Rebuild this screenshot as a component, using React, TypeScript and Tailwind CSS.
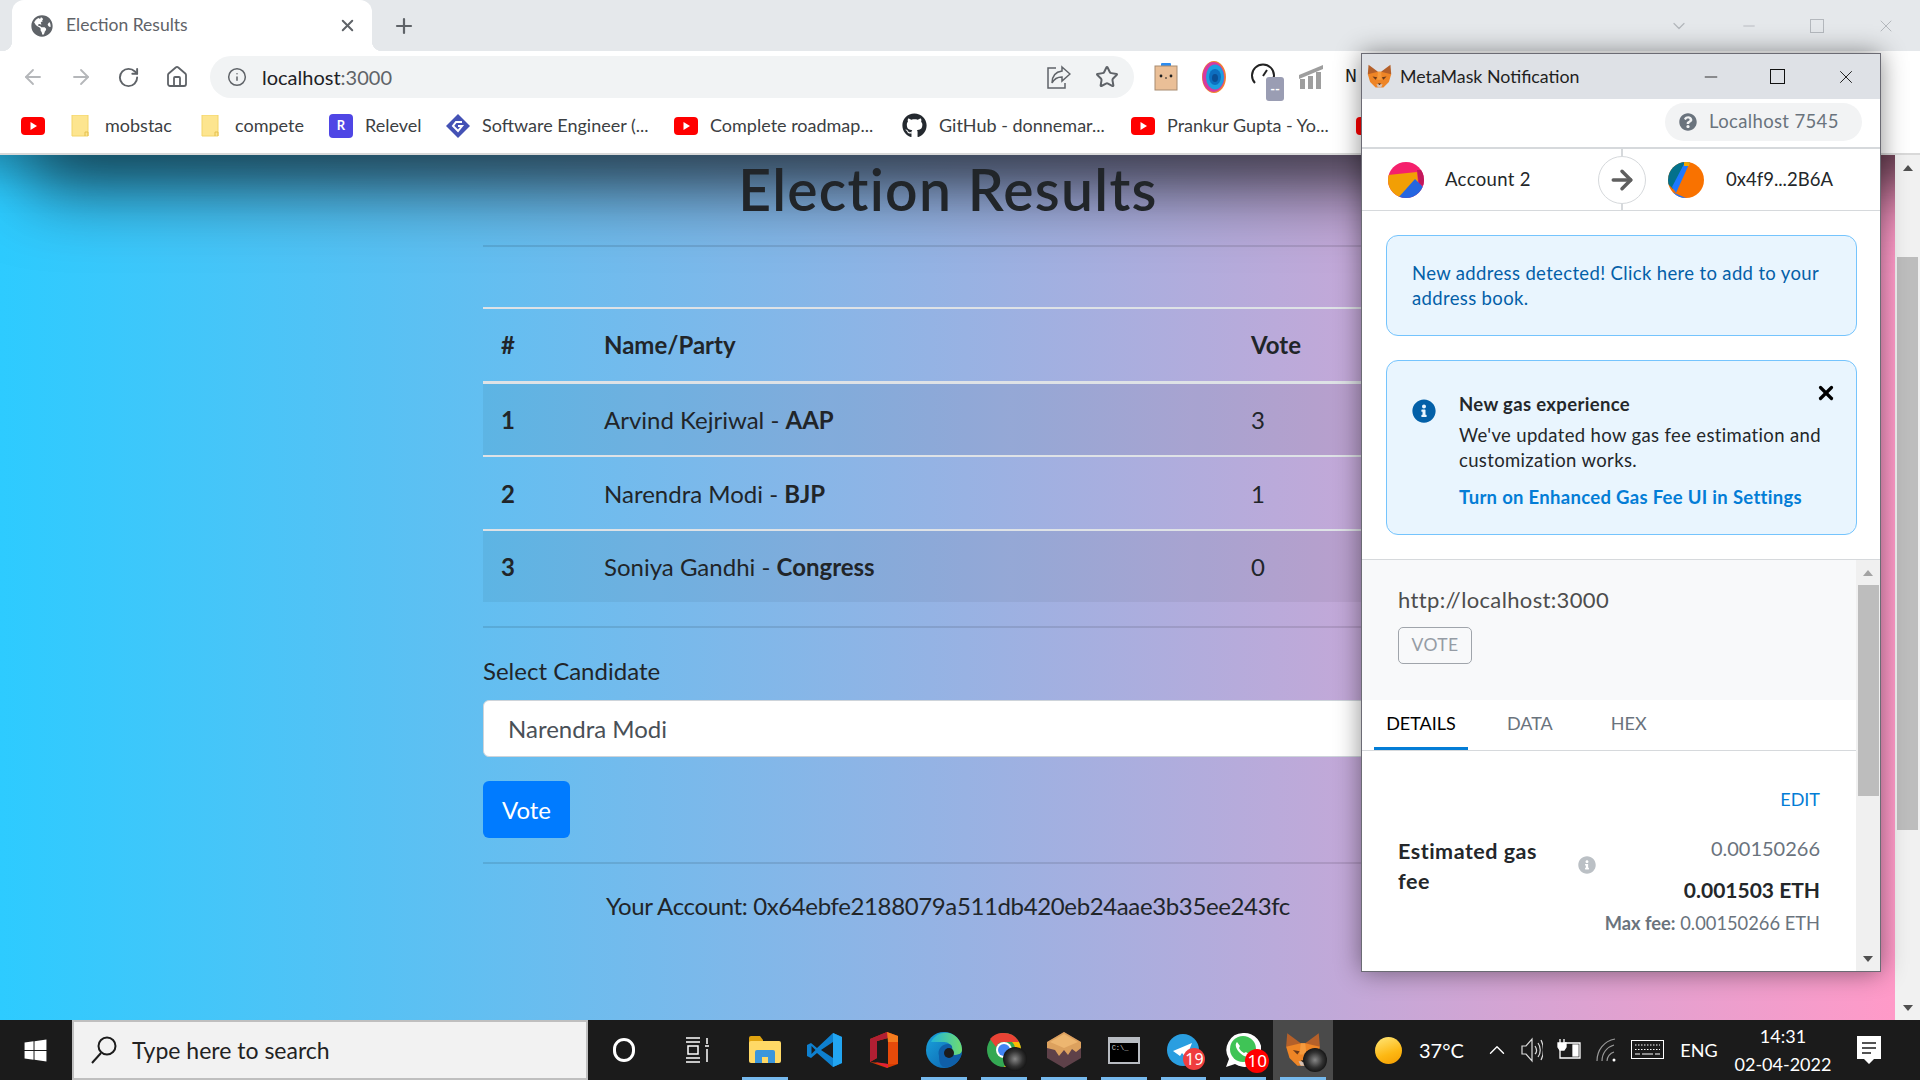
import React from "react";
import { ArrowLeft, ArrowRight, RotateCw, Home, Info, Star, X, Plus, Minus, ChevronUp, ArrowRight as Arr } from "lucide-react";
import { FaGithub, FaGlobeAmericas, FaInfoCircle, FaQuestionCircle, FaWindows } from "react-icons/fa";

const Yt = () => (
  <svg width="24" height="18" viewBox="0 0 24 18" className="shrink-0">
    <rect width="24" height="18" rx="4" fill="#f00" />
    <polygon points="9.5,5 9.5,13 16,9" fill="#fff" />
  </svg>
);
const Folder = () => (
  <svg width="18" height="22" viewBox="0 0 18 22" className="shrink-0">
    <path d="M1 0h16v21H1z" fill="#fde58f" stroke="#f3d56b" />
    <path d="M14 21v-4h3v4" fill="none" stroke="#e5c04f" />
  </svg>
);
const Relevel = () => (
  <div className="w-6 h-6 shrink-0 rounded-[4px] bg-[#4f46e5] text-white text-[13px] font-bold flex items-center justify-center">R</div>
);
const Diamond = () => (
  <svg width="24" height="24" viewBox="0 0 24 24" className="shrink-0">
    <polygon points="12,0 24,12 12,24 0,12" fill="#4452b5" />
    <path d="M16 8h-6l-3 4 5 5 4-5h-4" fill="none" stroke="#fff" strokeWidth="2" />
  </svg>
);
const Fox = ({ size = 24 }: { size?: number }) => (
  <svg width={size} height={size} viewBox="0 0 32 32" className="shrink-0">
    <polygon points="2,1 14,10 9,17 1,13" fill="#b4602a" />
    <polygon points="30,1 18,10 23,17 31,13" fill="#b4602a" />
    <polygon points="1,13 14,10 18,10 31,13 28,23 21,30 11,30 4,23" fill="#ee8526" />
    <polygon points="14,10 18,10 19,20 13,20" fill="#f69b3e" />
    <polygon points="7,16 13,17 11,20" fill="#6b3a1a" />
    <polygon points="25,16 19,17 21,20" fill="#6b3a1a" />
    <polygon points="12,26 20,26 18,30 14,30" fill="#d7c1b3" />
    <polygon points="14,25 18,25 16,27" fill="#222" />
  </svg>
);
const Tile = () => (
  <svg width="24" height="28" viewBox="0 0 24 28">
    <rect x="7" y="0" width="10" height="5" rx="1" fill="#2c8cf0" />
    <rect x="1" y="3" width="22" height="24" fill="#eabf97" stroke="#a88b70" />
    <circle cx="7" cy="13" r="1.4" fill="#222" />
    <circle cx="17" cy="13" r="1.4" fill="#222" />
    <path d="M11 15h2" stroke="#222" />
  </svg>
);
const Orb = () => (
  <svg width="24" height="32" viewBox="0 0 24 32">
    <ellipse cx="12" cy="16" rx="12" ry="16" fill="#f2852e" />
    <ellipse cx="11.5" cy="16" rx="11" ry="15" fill="#d63aa0" />
    <ellipse cx="13" cy="16" rx="9" ry="12.5" fill="#1c9ee0" />
    <ellipse cx="13" cy="16" rx="6" ry="8" fill="#0d6fc0" />
    <ellipse cx="13" cy="17" rx="3" ry="4" fill="#0a4f95" />
  </svg>
);
const Gauge = () => (
  <div className="relative w-[30px] h-[30px]">
    <svg width="26" height="26" viewBox="0 0 26 26">
      <path d="M5 21a11 11 0 1 1 16 0" fill="none" stroke="#222" strokeWidth="2" />
      <path d="M13 14l4-6" stroke="#222" strokeWidth="2" />
    </svg>
    <div className="absolute left-[16px] top-[15px] w-[18px] h-[24px] rounded-[3px] bg-[#9a9db3] text-white text-[13px] font-bold leading-[24px] text-center">--</div>
  </div>
);
const Bars = () => (
  <svg width="24" height="24" viewBox="0 0 24 24" fill="#9e9e9e">
    <polygon points="0,10 24,0 24,4 0,14" />
    <rect x="1" y="14" width="5" height="10" />
    <rect x="9" y="11" width="5" height="13" />
    <rect x="17" y="7" width="5" height="17" />
  </svg>
);
const Share = () => (
  <svg width="24" height="24" viewBox="0 0 24 24" fill="none" stroke="#5f6368" strokeWidth="1.5">
    <path d="M9 3H1v20h17v-5" />
    <path d="M15 2l8 7-8 7v-4c-5 0-8 2-10 6 0-6 3-11 10-12z" />
  </svg>
);

const Sun = () => <div className="w-[27px] h-[27px] rounded-full bg-[linear-gradient(160deg,#ffe77a,#fdb813_60%,#f59c00)]" />;
const VSCode = () => (
  <svg width="36" height="36" viewBox="0 0 36 36">
    <path d="M26 1l9 4v26l-9 4-16-14-6 5-4-2V13l4-2 6 5z" fill="#0e80cf" />
    <path d="M26 1l9 4v26l-9 4z" fill="#22a5f1" />
    <path d="M26 10L14 18l12 8z" fill="#1c1c1c" />
    <path d="M4.500 14v8l4-4z" fill="#1c1c1c" />
  </svg>
);
const Office = () => (
  <svg width="28" height="36" viewBox="0 0 28 36">
    <path d="M17 0l11 4v28l-11 4-17-6 18 2V6L7 9v17l-7 4V7z" fill="#d83b01" />
    <path d="M17 0L0 7v23l7-4V9l11-3V0z" fill="#b11f33" />
    <path d="M18 6l10-2v28l-10 0z" fill="#e64a0a" />
    <path d="M17 0l11 4v6h-10z" fill="#f57c1e" />
    <path d="M5 30l13 2v4z" fill="#e0203a" />
  </svg>
);
const Edge = () => (
  <svg width="36" height="36" viewBox="0 0 36 36">
    <defs>
      <linearGradient id="eg" x1="0" y1="0" x2="1" y2="1">
        <stop offset="0" stopColor="#1aa5dd" />
        <stop offset="1" stopColor="#0b5cab" />
      </linearGradient>
      <linearGradient id="eg2" x1="0" y1="0" x2="1" y2="0">
        <stop offset="0" stopColor="#23b5d8" />
        <stop offset="1" stopColor="#6fdc70" />
      </linearGradient>
    </defs>
    <circle cx="18" cy="18" r="18" fill="url(#eg)" />
    <path d="M5 10C9 2 18-1 26 2c6 3 10 9 10 16 0 3-3 5-7 5-3 0-4-2-3-4 1-5-3-9-8-9-6 0-10 0-13 0z" fill="url(#eg2)" />
    <path d="M13 24c-2-7 3-12 9-12 3 0 5 2 4 6-2 6 4 6 10 3-2 9-10 15-18 14-4-1-5-6-5-11z" fill="#0f5fa8" />
    <circle cx="23" cy="21" r="5" fill="#1c1c1c" />
  </svg>
);
const Thumb = () => (
  <div className="absolute right-[-6px] bottom-[-4px] w-6 h-6 rounded-full bg-[radial-gradient(circle_at_50%_50%,#888_0%,#333_45%,#111_75%)] overflow-hidden" />
);
const ChromeLogo = () => (
  <div className="relative w-[34px] h-[34px]">
    <svg width="34" height="34" viewBox="0 0 34 34">
      <circle cx="17" cy="17" r="17" fill="#34a853" />
      <path d="M17 0a17 17 0 0 1 15 9H17a8 8 0 0 0-8 5L3 6a17 17 0 0 1 14-6z" fill="#ea4335" />
      <path d="M32 9a17 17 0 0 1-15 25l7-12a8 8 0 0 0 1-13z" fill="#fbbc04" />
      <circle cx="17" cy="17" r="8" fill="#fff" />
      <circle cx="17" cy="17" r="6" fill="#4285f4" />
    </svg>
    <Thumb />
  </div>
);
const Explorer = () => (
  <svg width="32" height="28" viewBox="0 0 32 28">
    <path d="M0 2a2 2 0 0 1 2-2h9l3 4v4H0z" fill="#e0a410" />
    <rect y="5" width="32" height="22" rx="2" fill="#ffd966" />
    <path d="M6 27V16a2 2 0 0 1 2-2h16a2 2 0 0 1 2 2v11h-7v-6h-6v6z" fill="#3a96dd" />
  </svg>
);
const BoxApp = () => (
  <svg width="34" height="36" viewBox="0 0 34 36">
    <polygon points="17,0 34,10 34,26 17,36 0,26 0,10" fill="#5e4149" />
    <polygon points="17,0 34,10 34,16 29,20 25,17 21,23 17,18 12,24 8,18 0,16 0,10" fill="#dca15e" />
    <polygon points="17,2 31,10 17,16 3,10" fill="#edb670" />
  </svg>
);
const Cmd = () => (
  <div className="w-8 h-[27px] border-[2px] border-[#b8bcc2] bg-black flex flex-col">
    <div className="h-[4px] bg-[#b8bcc2]" />
    <div className="text-[7px] leading-[10px] pl-[2px] text-[#ccc] font-['Liberation_Mono',monospace]">C:\_</div>
  </div>
);
const Telegram = () => (
  <div className="relative w-8 h-8">
    <svg width="32" height="32" viewBox="0 0 32 32">
      <circle cx="16" cy="16" r="16" fill="#2a9ee0" />
      <path d="M6 17l19-8-6 15-4-5-2 3z" fill="#fff" />
    </svg>
    <div className="absolute right-[-6px] bottom-[-4px] w-[22px] h-[22px] rounded-full bg-[#ef3e3e] text-white text-[16px] leading-[22px] text-center font-['Noto_Sans',sans-serif]">19</div>
  </div>
);
const Whats = () => (
  <div className="relative w-9 h-9">
    <svg width="36" height="36" viewBox="0 0 36 36">
      <path d="M18 1a17 17 0 0 0-14 26L1 35l9-3A17 17 0 1 0 18 1z" fill="#fff" />
      <circle cx="18" cy="17" r="13" fill="#3fc456" />
      <path d="M12 10c-3 3 0 8 3 11s7 5 10 2l-4-3-2 1c-2-1-4-3-5-5l1-2z" fill="#fff" />
    </svg>
    <div className="absolute right-[-8px] bottom-[-5px] w-6 h-6 rounded-full bg-[#f00] text-white text-[17px] leading-[24px] text-center font-['Noto_Sans',sans-serif]">10</div>
  </div>
);
const FoxBig = () => (
  <div className="relative w-9 h-9">
    <Fox size={36} />
    <Thumb />
  </div>
);

const jazz1 = (
  <svg width="36" height="36" viewBox="0 0 36 36" className="rounded-full shrink-0">
    <rect width="36" height="36" fill="#f5206c" />
    <polygon points="29,8 36,8 36,24 31,22" fill="#c2185b" />
    <polygon points="0,13 29,10 30,20 10,36 0,36" fill="#f29f05" />
    <polygon points="10,36 27,17 36,26 36,36" fill="#2566e0" />
  </svg>
);
const jazz2 = (
  <svg width="36" height="36" viewBox="0 0 36 36" className="rounded-full shrink-0">
    <rect width="36" height="36" fill="#f97200" />
    <polygon points="0,0 20,0 5,27 0,22" fill="#03718c" />
    <polygon points="17,0 22,0 8,31 4,25" fill="#1e78ff" />
    <polygon points="16,0 22,0 21,4 16,4" fill="#f2a800" />
    <polygon points="4,30 18,36 4,36" fill="#1e78ff" />
  </svg>
);

const rows = [
  ["1", "Arvind Kejriwal", "AAP", "3", true],
  ["2", "Narendra Modi", "BJP", "1", false],
  ["3", "Soniya Gandhi", "Congress", "0", true],
] as const;

const bookmarks: { icon: React.ReactNode; label: string; w: string; gap: string }[] = [
  { icon: <Yt />, label: "", w: "w-[50px]", gap: "gap-[12px]" },
  { icon: <Folder />, label: "mobstac", w: "w-[130px]", gap: "gap-[16px]" },
  { icon: <Folder />, label: "compete", w: "w-[128px]", gap: "gap-[16px]" },
  { icon: <Relevel />, label: "Relevel", w: "w-[117px]", gap: "gap-[12px]" },
  { icon: <Diamond />, label: "Software Engineer (...", w: "w-[228px]", gap: "gap-[12px]" },
  { icon: <Yt />, label: "Complete roadmap...", w: "w-[228px]", gap: "gap-[12px]" },
  { icon: <FaGithub size={25} color="#24292f" className="shrink-0" />, label: "GitHub - donnemar...", w: "w-[229px]", gap: "gap-[12px]" },
  { icon: <Yt />, label: "Prankur Gupta - Yo...", w: "w-[225px]", gap: "gap-[12px]" },
  { icon: <Yt />, label: "", w: "w-[30px]", gap: "gap-[12px]" },
];

const taskApps: { el: React.ReactNode; bar?: boolean; active?: boolean }[] = [
  { el: <Explorer />, bar: true },
  { el: <VSCode /> },
  { el: <Office /> },
  { el: <Edge />, bar: true },
  { el: <ChromeLogo />, bar: true },
  { el: <BoxApp />, bar: true },
  { el: <Cmd />, bar: true },
  { el: <Telegram />, bar: true },
  { el: <Whats />, bar: true },
  { el: <FoxBig />, bar: true, active: true },
];

function MetaMask() {
  return (
    <div className="absolute left-[1361px] top-[53px] w-[520px] h-[919px] bg-white border border-[#6b6b74] shadow-[0_0_24px_rgba(0,0,0,0.45)] flex flex-col font-['Lato',sans-serif] text-[18.500px] tracking-[0.35px] text-[#24272a] z-20">
      <div className="h-[45px] bg-[#dee1e6] flex items-center pl-[5px] shrink-0">
        <Fox size={25} />
        <span className="ml-[8px] text-[17.800px] tracking-normal text-[#1f1f1f]">MetaMask Notification</span>
        <div className="ml-auto flex items-center">
          <Minus size={20} strokeWidth={1} color="#111" className="mr-[49px]" />
          <div className="w-[15px] h-[15px] border border-[#111] mr-[50px]" />
          <X size={22} strokeWidth={1} color="#111" className="mr-[23px]" />
        </div>
      </div>
      <div className="h-[50px] flex justify-end items-start pt-[4px] pr-[18px] shrink-0 border-b-[2px] border-[#d6d9dc]">
        <div className="w-[197px] h-[38px] rounded-full bg-[#f2f3f4] flex items-center pl-[14px] gap-[12px]">
          <FaQuestionCircle size={18} color="#6a737d" />
          <span className="text-[#6a737d]">Localhost 7545</span>
        </div>
      </div>
      <div className="relative h-[62px] flex items-center shrink-0 border-b border-[#d6d9dc]">
        <div className="absolute left-[259px] top-0 bottom-0 w-[2px] bg-[#d6d9dc]" />
        <div className="w-[260px] flex items-center pl-[26px] gap-[21px]">
          {jazz1}
          <span>Account 2</span>
        </div>
        <div className="absolute left-[236px] top-[7px] w-[48px] h-[48px] rounded-full bg-white border border-[#d6d9dc] flex items-center justify-center">
          <Arr size={30} strokeWidth={2.8} color="#5f5f5f" />
        </div>
        <div className="flex items-center pl-[46px] gap-[22px]">
          {jazz2}
          <span className="tracking-normal">0x4f9...2B6A</span>
        </div>
      </div>
      <div className="h-[349px] shrink-0 pl-[24px] pr-[23px] pt-[24px] border-b border-[#d6d9dc]">
        <div className="h-[101px] rounded-[12px] border border-[#75c4fd] bg-[#e9f5fe] pl-[25px] pr-[20px] pt-[25px] leading-[25px] text-[#0360a8]">
          New address detected! Click here to add to your address book.
        </div>
        <div className="relative mt-[24px] h-[175px] rounded-[12px] border border-[#75c4fd] bg-[#e9f5fe] flex pl-[25px] pr-[20px]">
          <FaInfoCircle size={24} color="#0360a8" className="mt-[38px] shrink-0" />
          <div className="ml-[23px] pt-[31px]">
            <div className="font-bold leading-[25px]">New gas experience</div>
            <div className="mt-[6px] leading-[25px]">We've updated how gas fee estimation and customization works.</div>
            <div className="mt-[12px] leading-[25px] font-bold tracking-[0.3px] text-[#037dd6] whitespace-nowrap">Turn on Enhanced Gas Fee UI in Settings</div>
          </div>
          <X size={22} strokeWidth={3.5} color="#000" className="absolute right-[19px] top-[21px]" />
        </div>
      </div>
      <div className="flex-1 flex min-h-0">
        <div className="w-[494px] flex flex-col">
          <div className="h-[140px] bg-[#f8f9fa] pl-[36px] pt-[26px] shrink-0">
            <div className="text-[22px] leading-[28px] text-[#4d4d4d]">http://localhost:3000</div>
            <div className="mt-[13px] w-[74px] h-[37px] border border-[#a0a5ab] rounded-[5px] text-[#959ca5] flex items-center justify-center text-[17.500px]">VOTE</div>
          </div>
          <div className="h-[51px] shrink-0 border-b border-[#d6d9dc] flex items-start pl-[12px] text-[18px] tracking-normal">
            <div className="w-[94px] h-[50px] border-b-[3px] border-[#037dd6] text-center leading-[46px] text-[#000]">DETAILS</div>
            <div className="ml-[39px] leading-[46px] text-[#6a737d]">DATA</div>
            <div className="ml-[58px] leading-[46px] text-[#6a737d]">HEX</div>
          </div>
          <div className="pl-[36px] pr-[36px] pt-[36px] flex-1">
            <div className="text-right text-[#037dd6] text-[18px] leading-[24px] tracking-normal">EDIT</div>
            <div className="mt-[16px] flex">
              <div className="w-[153px] font-bold text-[21.500px] tracking-[0.5px] leading-[30px] pt-[9px]">Estimated gas fee</div>
              <FaInfoCircle size={18} color="#bbc0c5" className="ml-[27px] mt-[29px] shrink-0" />
              <div className="flex-1 text-right pt-[7px] tracking-normal">
                <div className="text-[20px] leading-[28px] text-[#6a737d]">0.00150266</div>
                <div className="mt-[14px] text-[21px] leading-[28px] font-bold">0.001503 ETH</div>
                <div className="mt-[7px] text-[18.300px] text-[#6a737d] leading-[25px]">
                  <span className="font-bold">Max fee:</span> 0.00150266 ETH
                </div>
              </div>
            </div>
          </div>
        </div>
        <div className="ml-auto w-[24px] bg-[#f0f0f0] flex flex-col items-center relative">
          <div className="mt-[10px] w-0 h-0 border-x-[5px] border-x-transparent border-b-[6px] border-b-[#a3a3a3]" />
          <div className="mt-[9px] w-[21px] h-[211px] bg-[#bdbdbd]" />
          <div className="mt-auto mb-[9px] w-0 h-0 border-x-[5px] border-x-transparent border-t-[6px] border-t-[#505050]" />
        </div>
      </div>
    </div>
  );
}

export default function App() {
  return (
    <div className="relative w-[1920px] h-[1080px] overflow-hidden flex flex-col bg-white font-['Lato',sans-serif]">
      {/* tab strip */}
      <div className="h-[51px] bg-[#e5e8eb] flex items-end pl-[12px] shrink-0">
        <div className="relative w-[360px] h-[51px] bg-white rounded-t-[12px] flex items-center pl-[19px] before:absolute before:left-[-10px] before:bottom-0 before:w-[10px] before:h-[10px] before:bg-[radial-gradient(circle_at_0_0,#e5e8eb_10px,#fff_10.5px)] after:absolute after:right-[-10px] after:bottom-0 after:w-[10px] after:h-[10px] after:bg-[radial-gradient(circle_at_100%_0,#e5e8eb_10px,#fff_10.5px)]">
          <FaGlobeAmericas size={22} color="#5f6368" />
          <span className="ml-[13px] text-[17.500px] text-[#5f6368]">Election Results</span>
          <X size={19} strokeWidth={2.5} color="#5f6368" className="ml-auto mr-[15px]" />
        </div>
        <Plus size={24} strokeWidth={2.2} color="#5f6368" className="ml-[20px] mb-[13px]" />
        <div className="ml-auto flex items-center mb-[15px] text-[#b4b8bd]">
          <ChevronUp size={20} strokeWidth={1.5} className="rotate-180 mr-[1px]" />
          <Minus size={18} strokeWidth={1.2} className="ml-[50px]" />
          <div className="ml-[52px] w-[14px] h-[14px] border border-[#b4b8bd]" />
          <X size={20} strokeWidth={1.2} className="ml-[52px] mr-[24px]" />
        </div>
      </div>
      {/* toolbar */}
      <div className="h-[52px] flex items-center pl-[21px] shrink-0">
        <ArrowLeft size={24} strokeWidth={1.8} color="#b5b7ba" />
        <ArrowRight size={24} strokeWidth={1.8} color="#b5b7ba" className="ml-[24px]" />
        <RotateCw size={23} strokeWidth={2} color="#5f6368" className="ml-[24px]" />
        <Home size={24} strokeWidth={1.8} color="#5f6368" className="ml-[25px]" />
        <div className="ml-[21px] w-[924px] h-[42px] rounded-full bg-[#f1f3f4] flex items-center pl-[17px] pr-[15px]">
          <Info size={20} strokeWidth={1.8} color="#5f6368" />
          <span className="ml-[15px] text-[20px] text-[#202124]">localhost<span className="text-[#5f6368]">:3000</span></span>
          <div className="ml-auto"><Share /></div>
          <Star size={24} strokeWidth={2} color="#5f6368" className="ml-[24px]" />
        </div>
        <div className="ml-[20px]"><Tile /></div>
        <div className="ml-[24px]"><Orb /></div>
        <div className="ml-[24px]"><Gauge /></div>
        <div className="ml-[19px]"><Bars /></div>
        <span className="ml-[22px] text-[20px] font-['Liberation_Mono',monospace] text-[#222]">N</span>
      </div>
      {/* bookmarks */}
      <div className="h-[50px] pl-[21px] pb-[5px] flex items-center shrink-0 overflow-hidden">
        {bookmarks.map((b, i) => (
          <div key={i} className={`${b.w} ${b.gap} shrink-0 flex items-center`}>
            {b.icon}
            {b.label && <span className="text-[18px] text-[#3c4043] whitespace-nowrap">{b.label}</span>}
          </div>
        ))}
      </div>
      <div className="h-[2px] bg-[#d9d9d9] shrink-0" />
      {/* page */}
      <div className="relative flex-1 flex min-h-0">
        <div className="relative flex-1 overflow-hidden bg-[linear-gradient(90deg,#2dcbff,#ff9ac8)] pl-[483px] text-[#212529] text-[24px]">
          <div className="absolute left-[50px] -right-[60px] -top-[40px] h-[40px] shadow-[0_14px_70px_20px_rgba(0,0,0,0.6)]" />
          <div className="absolute -left-[60px] -right-[60px] -top-[40px] h-[40px] shadow-[0_0_40px_15px_rgba(0,0,0,0.28)]" />
          <div className="relative w-[934px]">
            <h1 className="h-[68px] leading-[68px] text-[57px] text-center font-semibold pr-[4px] tracking-[1.3px]">Election Results</h1>
            <div className="mt-[22px] h-[2px] bg-[rgba(0,0,0,0.1)]" />
            <table className="mt-[60px] w-full table-fixed border-collapse">
              <colgroup>
                <col className="w-[121px]" />
                <col className="w-[647px]" />
                <col />
              </colgroup>
              <thead>
                <tr className="h-[74px] border-t-[2px] border-b-[3px] border-t-[#dee2e6] border-b-[#dee2e6]">
                  <th className="pl-[18px] pt-[1px] text-left font-bold">#</th>
                  <th className="pt-[1px] text-left font-bold">Name/Party</th>
                  <th className="pt-[1px] text-left font-bold">Vote</th>
                </tr>
              </thead>
              <tbody>
                {rows.map((r) => (
                  <tr key={r[0]} className={`h-[74px] last:h-[72px] border-b-[2px] border-[#dee2e6] last:border-b-0 ${r[4] ? "bg-[rgba(0,0,0,0.05)]" : ""}`}>
                    <td className="pl-[18px] pt-[1px] font-bold">{r[0]}</td>
                    <td className="pt-[1px]">{r[1]} - <b>{r[2]}</b></td>
                    <td className="pt-[1px]">{r[3]}</td>
                  </tr>
                ))}
              </tbody>
            </table>
            <div className="mt-[24px] h-[2px] bg-[rgba(0,0,0,0.1)]" />
            <div className="mt-[25px] leading-[36px]">Select Candidate</div>
            <div className="mt-[11px] h-[57px] rounded-[6px] bg-white border-[1.5px] border-[#ced4da] pl-[24px] flex items-center text-[#495057]">Narendra Modi</div>
            <div className="mt-[24px] w-[87px] h-[57px] rounded-[6px] bg-[#007bff] text-white flex items-center justify-center">Vote</div>
            <div className="mt-[24px] h-[2px] bg-[rgba(0,0,0,0.1)]" />
            <p className="mt-[24px] leading-[36px] text-center pr-[4px] tracking-[-0.37px]">Your Account: 0x64ebfe2188079a511db420eb24aae3b35ee243fc</p>
          </div>
        </div>
        <div className="w-[25px] bg-[#f1f1f1] flex flex-col items-center">
          <div className="mt-[10px] w-0 h-0 border-x-[5px] border-x-transparent border-b-[6px] border-b-[#505050]" />
          <div className="mt-[86px] w-[21px] h-[573px] bg-[#bdbdbd]" />
          <div className="mt-auto mb-[9px] w-0 h-0 border-x-[5px] border-x-transparent border-t-[6px] border-t-[#505050]" />
        </div>
      </div>
      {/* taskbar */}
      <div className="h-[60px] bg-[#1b1b1b] flex shrink-0 text-white">
        <div className="w-[72px] pr-[2px] flex items-center justify-center">
          <FaWindows size={25} color="#fff" />
        </div>
        <div className="w-[516px] bg-[#f2f2f2] border-[2px] border-[#bfbfbf] flex items-center pl-[17px]">
          <svg width="30" height="30" viewBox="0 0 30 30" fill="none" stroke="#1c1c1c" strokeWidth="2" className="-ml-[2px]">
            <circle cx="18" cy="11" r="8.500" />
            <path d="M12 18L3 28" />
          </svg>
          <span className="ml-[13px] text-[23px] text-[#222]">Type here to search</span>
        </div>
        <div className="w-[71px] flex items-center justify-center">
          <div className="w-[22px] h-[24px] rounded-full border-[3px] border-white" />
        </div>
        <div className="w-[76px] flex items-center justify-center">
          <svg width="24" height="26" viewBox="0 0 24 26" fill="none" stroke="#fff" strokeWidth="1.5">
            <path d="M1 1h14M1 5h14M1 21h14M1 25h14M3 9h10v8H3zM22 1v6M22 12v13M20 9h4" />
          </svg>
        </div>
        {taskApps.map((a, i) => (
          <div key={i} className={`relative w-[59.800px] flex items-center justify-center ${a.active ? "bg-[#4a4a4a]" : ""}`}>
            {a.el}
            {a.bar && <div className="absolute bottom-0 left-[7px] right-[7px] h-[3px] bg-[#76b9ed]" />}
          </div>
        ))}
        <div className="ml-[42px] flex items-center w-[44px]"><Sun /></div>
        <div className="w-[61px] flex items-center text-[20px]">37°C</div>
        <div className="w-[35px] flex items-center justify-center"><ChevronUp size={26} strokeWidth={1.3} /></div>
        <div className="w-[35px] flex items-center justify-center">
          <svg width="22" height="28" viewBox="0 0 22 28" fill="none" stroke="#ddd" strokeWidth="1.2">
            <path d="M1 10h4l6-7v22l-6-7H1zM14 10c2 3 2 6 0 8M17 7c3 4 3 10 0 14M20 4c3 6 3 14 0 20" />
          </svg>
        </div>
        <div className="w-[38px] flex items-center justify-center">
          <svg width="24" height="24" viewBox="0 0 24 24" fill="none" stroke="#fff" strokeWidth="1.3">
            <path d="M8 5h15v15H3v-8" />
            <path d="M3 1v4M7 1v4M1 5h8v4l-2 3H3L1 9z" fill="#fff" />
            <rect x="16" y="7" width="5" height="11" fill="#fff" />
          </svg>
        </div>
        <div className="w-[36px] flex items-center justify-center">
          <svg width="20" height="24" viewBox="0 0 20 24" fill="none" stroke="#9a9a9a" strokeWidth="1.2">
            <path d="M1 23C1 12 8 3 19 1M6 23C6 15 11 9 18 7M11 23c0-4 3-8 7-9" />
            <circle cx="18" cy="22" r="1.500" fill="#fff" stroke="none" />
          </svg>
        </div>
        <div className="w-[48px] flex items-center justify-center">
          <svg width="33" height="20" viewBox="0 0 33 20" fill="none" stroke="#fff">
            <rect x="0.500" y="0.500" width="32" height="18" />
            <path d="M4 5h25M4 9.500h25" strokeDasharray="1.500 1.500" />
            <path d="M4 14h5M11 14h11M24 14h5" />
          </svg>
        </div>
        <div className="w-[54px] flex items-center justify-center text-[18px]">ENG</div>
        <div className="w-[114px] flex flex-col items-center justify-center text-[18px] leading-[28px]">
          <span>14:31</span>
          <span>02-04-2022</span>
        </div>
        <div className="w-[58px] flex items-center justify-center">
          <svg width="24" height="28" viewBox="0 0 24 28">
            <path d="M0 0h24v23h-7l-5 5-5-5H0z" fill="#fff" />
            <path d="M5 7h14M5 12h14M5 17h9" stroke="#1b1b1b" strokeWidth="1.5" />
          </svg>
        </div>
      </div>
      <MetaMask />
    </div>
  );
}
